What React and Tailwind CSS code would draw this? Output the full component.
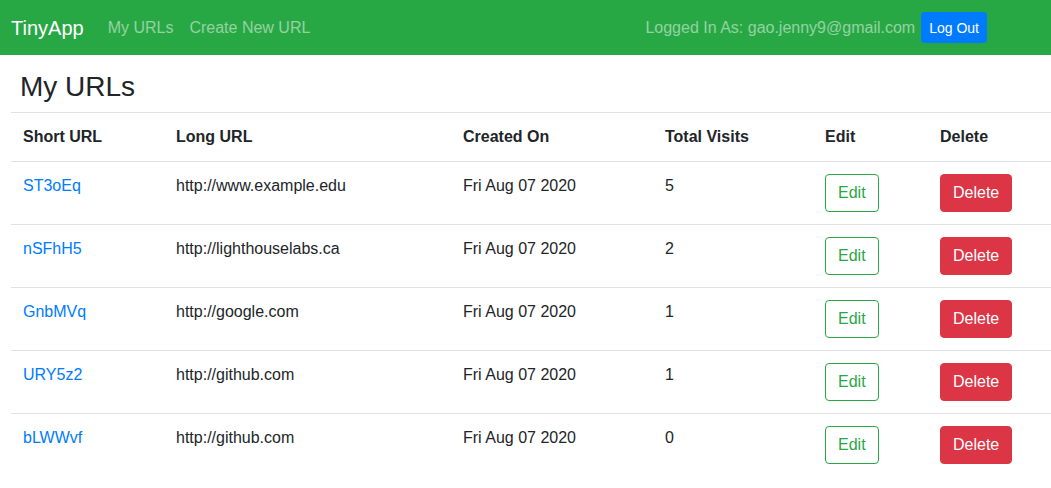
const urls = [
  { id: "ST3oEq", long: "http://www.example.edu", date: "Fri Aug 07 2020", visits: 5 },
  { id: "nSFhH5", long: "http://lighthouselabs.ca", date: "Fri Aug 07 2020", visits: 2 },
  { id: "GnbMVq", long: "http://google.com", date: "Fri Aug 07 2020", visits: 1 },
  { id: "URY5z2", long: "http://github.com", date: "Fri Aug 07 2020", visits: 1 },
  { id: "bLWWvf", long: "http://github.com", date: "Fri Aug 07 2020", visits: 0 },
];

function Navbar() {
  return (
    <nav className="h-[55px] bg-[#28a745] flex items-center pl-[11px] pr-[64px]">
      <a className="text-[20px] leading-[30px] text-white mr-[16px]">TinyApp</a>
      <a className="px-[8px] text-white/50">My URLs</a>
      <a className="px-[8px] text-white/50">Create New URL</a>
      <div className="ml-auto flex items-center">
        <span className="text-white/50 mr-[6px]">Logged In As: gao.jenny9@gmail.com</span>
        <button className="h-[31px] px-[8px] rounded-[4px] bg-[#007bff] text-white text-[14px]">
          Log Out
        </button>
      </div>
    </nav>
  );
}

function App() {
  return (
    <div className="min-h-screen bg-white text-[#212529] text-[16px] leading-[24px] font-['Liberation_Sans',Arial,sans-serif]">
      <Navbar />
      <h3 className="pl-[20px] pt-[15px] mb-[8px] text-[28px] leading-[34px] font-normal">My URLs</h3>
      <table className="ml-[11px] w-[1050px] table-fixed border-collapse text-left">
        <thead>
          <tr className="border-y border-[#dee2e6]">
            <th className="w-[153px] p-[12px] font-bold">Short URL</th>
            <th className="w-[287px] p-[12px] font-bold">Long URL</th>
            <th className="w-[202px] p-[12px] font-bold">Created On</th>
            <th className="w-[160px] p-[12px] font-bold">Total Visits</th>
            <th className="w-[115px] p-[12px] font-bold">Edit</th>
            <th className="p-[12px] font-bold">Delete</th>
          </tr>
        </thead>
        <tbody>
          {urls.map((u, i) => (
            <tr key={u.id} className={i < urls.length - 1 ? "border-b border-[#dee2e6]" : ""}>
              <td className="p-[12px] align-top">
                <a className="text-[#007bff]">{u.id}</a>
              </td>
              <td className="p-[12px] align-top">{u.long}</td>
              <td className="p-[12px] align-top">{u.date}</td>
              <td className="p-[12px] align-top">{u.visits}</td>
              <td className="p-[12px] align-top">
                <button className="h-[38px] px-[12px] rounded-[4px] border border-[#28a745] text-[#28a745]">
                  Edit
                </button>
              </td>
              <td className="p-[12px] align-top">
                <button className="h-[38px] px-[12px] rounded-[4px] border border-[#dc3545] bg-[#dc3545] text-white">
                  Delete
                </button>
              </td>
            </tr>
          ))}
        </tbody>
      </table>
    </div>
  );
}

export default App;
